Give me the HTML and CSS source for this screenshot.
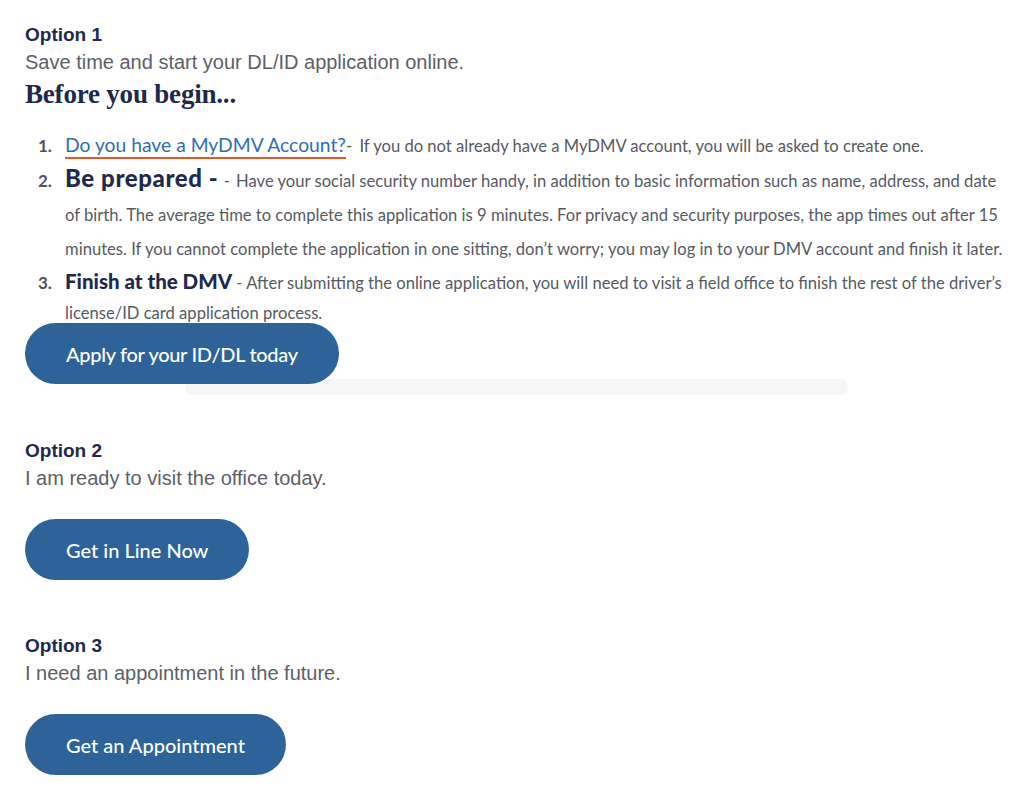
FILE: index.html
```html
<!DOCTYPE html>
<html lang="en">
<head>
<meta charset="utf-8">
<title>DMV Options</title>
<link rel="stylesheet" href="styles.css">
</head>
<body>
<main class="page">
  <section class="option option-1">
    <h2 class="opt-title">Option 1</h2>
    <p class="opt-sub">Save time and start your DL/ID application online.</p>
    <h3 class="begin">Before you begin...</h3>
    <ol class="steps">
      <li class="step step-1">
        <span class="num">1.</span>
        <div class="body"><a class="acct-link" href="#">Do you have a MyDMV Account?</a><span class="dash">-</span> If you do not already have a MyDMV account, you will be asked to create one.</div>
      </li>
      <li class="step step-2">
        <span class="num">2.</span>
        <div class="body"><strong class="lead lead-big">Be prepared -</strong> <span class="dash-sm">-</span> Have your social security number handy, in addition to basic information such as name, address, and date of birth. The average time to complete this application is 9 minutes. For privacy and security purposes, the app times out after 15 minutes. If you cannot complete the application in one sitting, don’t worry; you may log in to your DMV account and finish it later.</div>
      </li>
      <li class="step step-3">
        <span class="num">3.</span>
        <div class="body"><strong class="lead">Finish at the DMV</strong> - After submitting the online application, you will need to visit a field office to finish the rest of the driver’s license/ID card application process.</div>
      </li>
    </ol>
    <div class="btn-row">
      <a class="btn btn-condensed" href="#">Apply for your ID/DL today</a>
      <div class="shadow-bar"></div>
    </div>
  </section>

  <section class="option option-2">
    <h2 class="opt-title">Option 2</h2>
    <p class="opt-sub">I am ready to visit the office today.</p>
    <a class="btn" href="#">Get in Line Now</a>
  </section>

  <section class="option option-3">
    <h2 class="opt-title">Option 3</h2>
    <p class="opt-sub">I need an appointment in the future.</p>
    <a class="btn" href="#">Get an Appointment</a>
  </section>
</main>
</body>
</html>
```

FILE: styles.css
```css
* { box-sizing: border-box; }

html, body {
  margin: 0;
  padding: 0;
  background: #ffffff;
}

body {
  font-family: "Liberation Sans", Arial, sans-serif;
  color: #5b5e66;
}

.page {
  padding: 22px 25px 0 25px;
  display: flex;
  flex-direction: column;
}

.option {
  display: flex;
  flex-direction: column;
  align-items: flex-start;
}

.opt-title {
  margin: 0;
  font-family: "Liberation Sans", Arial, sans-serif;
  font-weight: 700;
  font-size: 19px;
  line-height: 26px;
  color: #1d2a4d;
}

.opt-sub {
  margin: 0;
  font-size: 20px;
  line-height: 28px;
  color: #5d6068;
}

.begin {
  margin: 0;
  font-family: "Liberation Serif", "DejaVu Serif", serif;
  font-weight: 700;
  font-size: 27px;
  line-height: 36px;
  color: #1d2a4d;
  letter-spacing: -0.2px;
}

.steps {
  list-style: none;
  margin: 18px 0 0 0;
  padding: 0;
  font-family: Lato, "Open Sans", sans-serif;
  font-size: 16.6px;
  color: #575a63;
  width: 978px;
}

.step {
  display: grid;
  grid-template-columns: 40px 1fr;
  align-items: baseline;
}

.num {
  padding-left: 13px;
  font-weight: 700;
  font-size: 17px;
  color: #4f525a;
}

.step-1 { line-height: 30px; }
.step-2 { line-height: 34px; }
.step-3 { line-height: 30px; }

.acct-link {
  font-size: 19.3px;
  color: #2f6db3;
  text-decoration: underline;
  text-decoration-color: #e2582a;
  text-decoration-thickness: 2px;
  text-underline-offset: 5px;
}

.dash { margin-right: 3px; }

.lead {
  font-weight: 900;
  font-size: 20.5px;
  color: #1d2a4d;
}

.lead-big {
  font-size: 24px;
  letter-spacing: 0.6px;
}

.dash-sm { margin-left: 1px; margin-right: 2px; }

.btn-row {
  display: flex;
  flex-direction: column;
  align-items: flex-start;
  margin-top: -5px;
}

.btn {
  position: relative;
  z-index: 1;
  display: inline-flex;
  align-items: center;
  height: 61px;
  padding: 0 41px;
  border-radius: 31px;
  background: #2d6399;
  color: #ffffff;
  font-family: Lato, "Open Sans", sans-serif;
  font-size: 20px;
  font-weight: 500;
  text-decoration: none;
  white-space: nowrap;
}

.btn-condensed {
  letter-spacing: -0.3px;
}

.shadow-bar {
  margin: -5px 0 0 160px;
  width: 663px;
  height: 16px;
  border-radius: 8px;
  background: #f5f6f8;
}

.option-2 { margin-top: 43px; }
.option-2 .opt-sub,
.option-3 .opt-sub { margin-bottom: 27px; }

.option-3 { margin-top: 53px; }
```
